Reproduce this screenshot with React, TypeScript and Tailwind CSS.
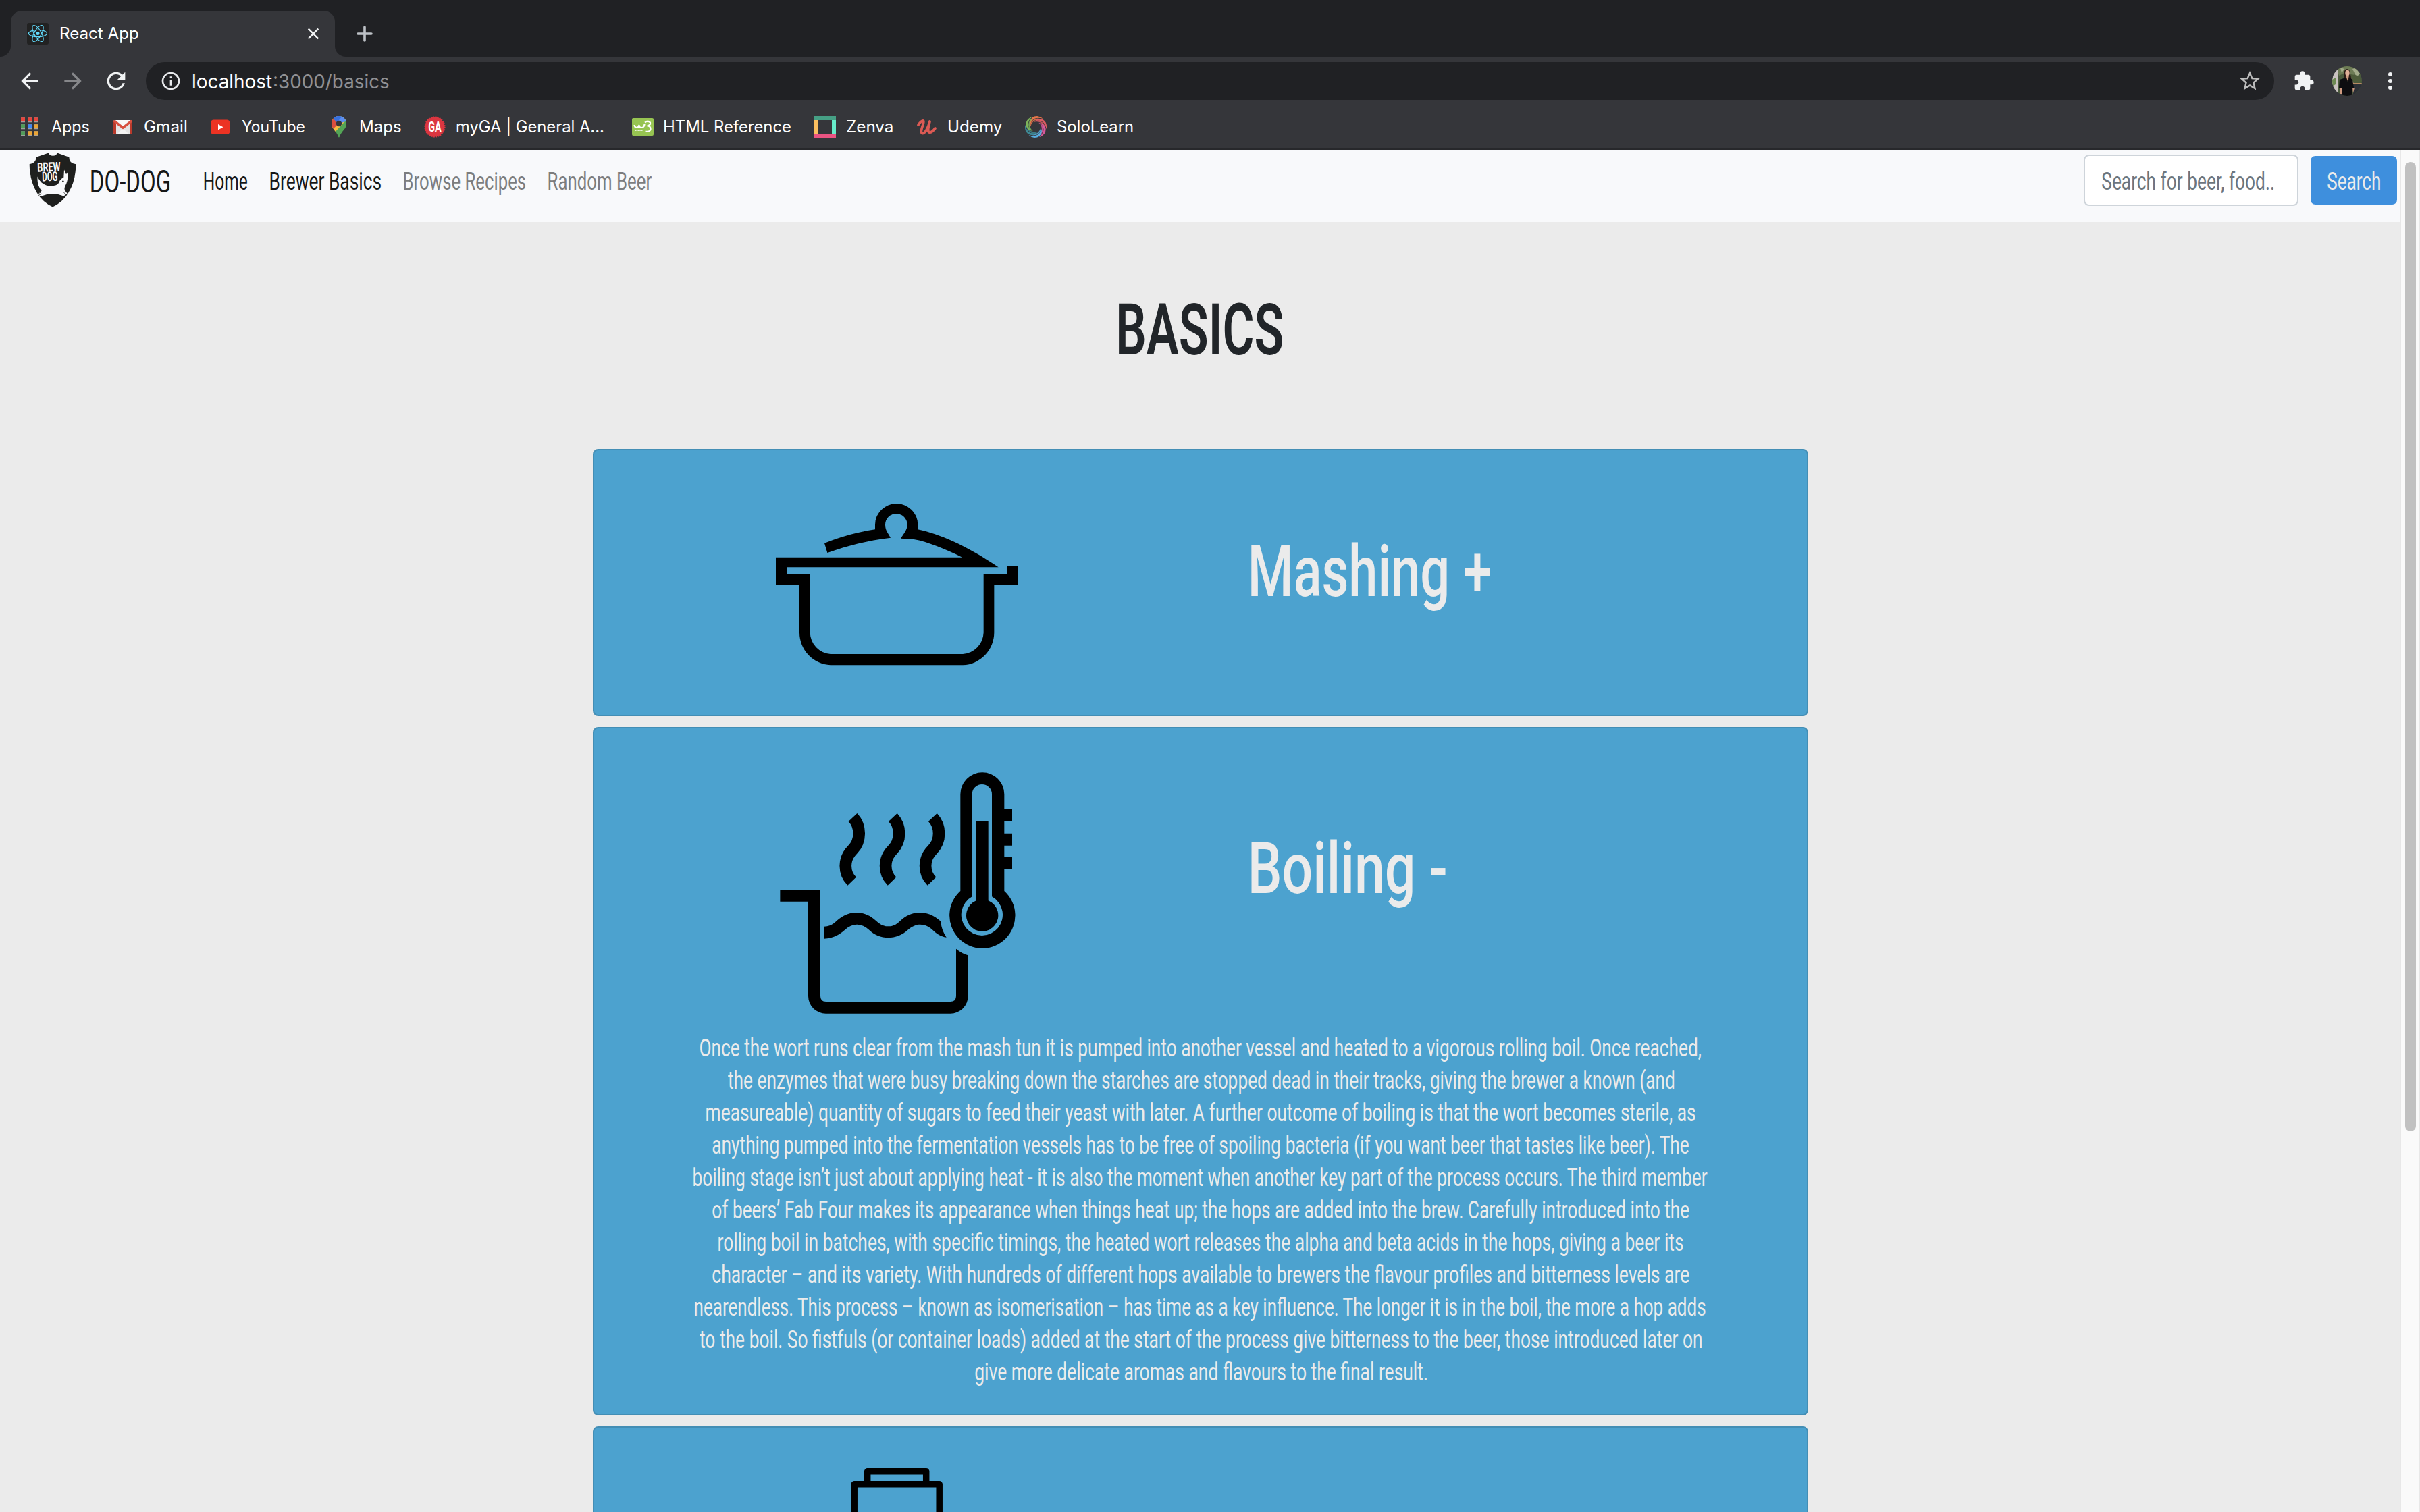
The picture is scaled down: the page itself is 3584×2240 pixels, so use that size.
import React, { useLayoutEffect, useRef } from "react";
import {
  MdArrowBack,
  MdArrowForward,
  MdClose,
  MdExtension,
  MdInfoOutline,
  MdRefresh,
  MdStarBorder,
} from "react-icons/md";

/** A single line of text, condensed or widened so that its ink spans `width` pixels. */
function Fit({ text, width, className = "" }: { text: string; width: number; className?: string }) {
  const ref = useRef<HTMLSpanElement>(null);
  useLayoutEffect(() => {
    const el = ref.current;
    const ctx = document.createElement("canvas").getContext("2d");
    if (!el || !ctx) return;
    const cs = getComputedStyle(el);
    ctx.font = `${cs.fontWeight} ${cs.fontSize} ${cs.fontFamily}`;
    const m = ctx.measureText(text);
    const ink = m.actualBoundingBoxRight + m.actualBoundingBoxLeft;
    const k = width / ink;
    el.style.transform = `translateX(${m.actualBoundingBoxLeft * k}px) scaleX(${k})`;
  }, [text, width]);
  return (
    <span className={`block shrink-0 whitespace-nowrap ${className}`} style={{ width }}>
      <span ref={ref} className="inline-block origin-left">
        {text}
      </span>
    </span>
  );
}

const ReactIcon = () => (
  <svg viewBox="0 0 32 32" className="h-8 w-8 shrink-0">
    <rect width="32" height="32" rx="3" fill="#222" />
    <g fill="none" stroke="#61dafb" strokeWidth="1.2">
      <ellipse cx="16" cy="15.5" rx="13.5" ry="5.2" />
      <ellipse cx="16" cy="15.5" rx="13.5" ry="5.2" transform="rotate(60 16 15.5)" />
      <ellipse cx="16" cy="15.5" rx="13.5" ry="5.2" transform="rotate(120 16 15.5)" />
    </g>
    <circle cx="16" cy="15.5" r="2.5" fill="#61dafb" />
  </svg>
);

const AppsIcon = () => (
  <svg viewBox="0 0 32 32" className="h-8 w-8 shrink-0">
    {[
      ["#e8453c", "#e8453c", "#e8453c"],
      ["#519c59", "#3f87f5", "#eaa436"],
      ["#519c59", "#eaa436", "#eaa436"],
    ].map((row, r) =>
      row.map((c, i) => (
        <g key={`${r}-${i}`}>
          <rect x={3 + i * 10} y={2.3 + r * 10} width="6" height="7" fill="#a3a3a3" />
          <rect x={3 + i * 10} y={2.3 + r * 10} width="6" height="5.8" fill={c} />
        </g>
      )),
    )}
  </svg>
);

const GmailIcon = () => (
  <svg viewBox="0 0 32 32" className="h-8 w-8 shrink-0">
    <rect x="2" y="6" width="28" height="21" rx="2" fill="#e4e4e4" />
    <path d="M7 27 16 18l9 9z" fill="#f3f3f3" />
    <path d="M5 6h22L16 15z" fill="#f8f8f8" />
    <path d="M2 8q0-2 2-2l2 1v20H4q-2 0-2-2zM30 8q0-2-2-2l-2 1v20h2q2 0 2-2z" fill="#b93a2c" />
    <path d="M2 8q0-2 2.500-2L16 15 27.500 6Q30 6 30 8.500L16 19.500 2 8.500z" fill="#d8503f" />
  </svg>
);

const YouTubeIcon = () => (
  <svg viewBox="0 0 32 32" className="h-8 w-8 shrink-0">
    <rect x="2" y="5.500" width="28.500" height="21.500" rx="4.500" fill="#ec3323" />
    <path d="M13 12v8.500l7.500-4.250z" fill="#fff" />
  </svg>
);

const MapsIcon = () => (
  <svg viewBox="0 0 32 32" className="h-8 w-8 shrink-0">
    <defs>
      <clipPath id="pin">
        <path d="M16 0C22 0 27 4.800 27 11c0 8-7 10-11 21C12 21 5 19 5 11 5 4.800 10 0 16 0z" />
      </clipPath>
    </defs>
    <g clipPath="url(#pin)">
      <rect width="32" height="32" fill="#54a556" />
      <path d="M0 0h32L7 27H0z" fill="#f5bd41" />
      <path d="M0 0h16l0 11L6 20 0 20z" fill="#d94f3f" />
      <path d="M7 3 12 0h14l2 7-8 3-5 1z" fill="#5a8df0" />
      <path d="M7 3 12 0h9L13 9.500z" fill="#3871dd" />
      <path d="M30 5 8 31h20z" fill="#54a556" />
    </g>
    <circle cx="16" cy="11" r="4.200" fill="#35363a" />
  </svg>
);

const GaIcon = () => (
  <svg viewBox="0 0 32 32" className="h-8 w-8 shrink-0">
    <circle cx="16" cy="16" r="14.500" fill="#db3640" stroke="#db3640" strokeWidth="2.200" strokeDasharray="2 1.250" />
    <g transform="translate(16 23) scale(.72 1)">
      <text textAnchor="middle" className="font-['Roboto',sans-serif] text-[20px] font-bold" fill="#fff">
        GA
      </text>
    </g>
  </svg>
);

const W3Icon = () => (
  <svg viewBox="0 0 32 32" className="h-8 w-8 shrink-0">
    <rect y="3" width="32" height="26" rx="2" fill="#97c452" />
    <path
      d="M3.500 13q.5 4 3.500 4t3.500-4q0 4 3.500 4 4 0 4.500-5M19 9.500q4.500-3.500 8 0 1 4-4.500 5 5.500 0 5 5-1 4.500-8 3"
      fill="none"
      stroke="#fff"
      strokeWidth="2.200"
    />
    <path d="M5 21h12" stroke="#e8f3d8" strokeWidth="1.800" strokeDasharray="1.400 .4" />
  </svg>
);

const ZenvaIcon = () => (
  <svg viewBox="0 0 32 32" className="h-8 w-8 shrink-0">
    <rect width="6" height="32" fill="#fbbf5f" />
    <rect x="26" width="6" height="32" fill="#66ecca" />
    <rect width="32" height="6" fill="#46a085" />
    <rect y="26" width="32" height="6" fill="#ea5482" />
  </svg>
);

const UdemyIcon = () => (
  <svg viewBox="0 0 32 32" className="h-8 w-8 shrink-0">
    <path
      d="M3 13Q8 6 10.500 7C13 9 5 21 8 25c4 3 10-8 12-17-2 8-4 14-1 16 3 1 6-2 9-6"
      fill="none"
      stroke="#dc5a54"
      strokeWidth="3.800"
      strokeLinecap="round"
      strokeLinejoin="round"
    />
  </svg>
);

const SoloIcon = () => (
  <svg viewBox="0 0 32 32" className="h-8 w-8 shrink-0">
    {["#e6774a", "#dc5b62", "#d7599b", "#58aee0", "#3d8894", "#7db45a"].map((c, i) => (
      <g key={c} transform={`rotate(${i * 60} 16 16)`}>
        <path d="M7 9Q9 0 18 0q6 1 8.500 4-5-2-9.500-1-7 1-9 10z" fill={c} />
        <path d="M8 13q2-9 11-9.500 3 0 5 2-8-1-12 3-3 3-3.500 7z" fill={c} opacity=".85" />
      </g>
    ))}
  </svg>
);

const bookmarks = [
  { label: "Apps", width: 56, box: "w-[138px]", Icon: AppsIcon },
  { label: "Gmail", width: 62, box: "w-[144px]", Icon: GmailIcon },
  { label: "YouTube", width: 93, box: "w-[176px]", Icon: YouTubeIcon },
  { label: "Maps", width: 60, box: "w-[142px]", Icon: MapsIcon },
  { label: "myGA | General A...", width: 218, box: "w-[308px]", Icon: GaIcon },
  { label: "HTML Reference", width: 187, box: "w-[270px]", Icon: W3Icon },
  { label: "Zenva", width: 68, box: "w-[151px]", Icon: ZenvaIcon },
  { label: "Udemy", width: 79, box: "w-[161px]", Icon: UdemyIcon },
  { label: "SoloLearn", width: 112, box: "w-[170px]", Icon: SoloIcon },
];

const Avatar = () => (
  <svg viewBox="0 0 44 44" className="ml-[26px] h-11 w-11 shrink-0 rounded-full">
    <rect width="44" height="44" fill="#4b5a3c" />
    <path d="M6 0h32v9l-8 5-8-6-12 6z" fill="#6d7b55" />
    <path d="M30 4l8-2 4 8-6 6zM12 2l6 2-4 6z" fill="#a3ab8a" />
    <path d="M28 12l10 2 6 10H30z" fill="#4d5b39" />
    <path d="M25 12l7 14-3 6z" fill="#c99f93" />
    <path d="M3 6l6 0v38H0V20z" fill="#c9c2c0" />
    <path d="M0 20l5-3v10l-5 3z" fill="#6d8a52" />
    <path d="M31 26h13v18H31z" fill="#2c3036" />
    <path d="M30 25h14v2H30z" fill="#b68a62" />
    <path d="M18 7q4-6 8 0l3 15H17z" fill="#2b1a15" />
    <ellipse cx="22.500" cy="10" rx="3.200" ry="4.500" fill="#dfae96" />
    <path d="M20 14h5l-2 8z" fill="#d09b82" />
    <path d="M11 20l9-3 3 6 3-6 4 3 2 12-3 6v6H15l-1-11-4-1z" fill="#0d0d10" />
    <path d="M11 32l3 0 1 10-3 0zM30 32h3l-2 8z" fill="#cf9a80" />
  </svg>
);

function Browser() {
  return (
    <header className="flex h-[222px] flex-col border-b-2 border-[#27282b] bg-[#35363a] font-['Inter',sans-serif] text-white">
      <div className="flex h-[84px] items-end bg-[#202124]">
        <div className="h-4 w-4 bg-[#35363a]">
          <div className="h-4 w-4 rounded-br-2xl bg-[#202124]" />
        </div>
        <div className="flex h-[68px] w-[480px] items-center rounded-t-2xl bg-[#35363a] pl-6">
          <ReactIcon />
          <Fit text="React App" width={115} className="ml-[18px] text-[24px] leading-8" />
          <MdClose className="ml-[245px] h-7 w-7 shrink-0 text-[#f1f3f4]" />
        </div>
        <div className="h-4 w-4 bg-[#35363a]">
          <div className="h-4 w-4 rounded-bl-2xl bg-[#202124]" />
        </div>
        <svg viewBox="0 0 24 24" className="mb-[22px] ml-4 h-6 w-6">
          <path d="M12 2v20M2 12h20" stroke="#bdc1c6" strokeWidth="3.600" strokeLinecap="round" />
        </svg>
      </div>
      <div className="flex h-[72px] shrink-0 items-center">
        <MdArrowBack className="ml-[25px] h-[38px] w-[38px] shrink-0 text-[#f1f3f4]" />
        <MdArrowForward className="ml-[26px] h-[38px] w-[38px] shrink-0 text-[#86878a]" />
        <MdRefresh className="ml-[25px] h-10 w-10 shrink-0 text-[#f1f3f4]" />
        <div className="ml-6 flex h-14 w-[3152px] shrink-0 items-center rounded-full bg-[#202124] pl-[21px] pr-[18px] text-[28px] leading-9">
          <MdInfoOutline className="h-8 w-8 shrink-0 text-[#e8eaed]" />
          <Fit text="localhost" width={117} className="ml-[17px] pt-px" />
          <Fit text=":3000/basics" width={170} className="ml-[3px] pt-px text-[#8f9093]" />
          <MdStarBorder className="ml-auto h-9 w-9 shrink-0 text-[#bdbdbd]" />
        </div>
        <MdExtension className="ml-7 h-8 w-8 shrink-0 text-[#f1f3f4]" />
        <Avatar />
        <div className="ml-[39px] flex flex-col gap-1">
          <div className="h-1.5 w-1.5 rounded-full bg-[#f1f3f4]" />
          <div className="h-1.5 w-1.5 rounded-full bg-[#f1f3f4]" />
          <div className="h-1.5 w-1.5 rounded-full bg-[#f1f3f4]" />
        </div>
      </div>
      <nav className="flex h-16 items-center pl-7">
        {bookmarks.map(({ label, width, box, Icon }) => (
          <div key={label} className={`flex shrink-0 items-center gap-4 ${box}`}>
            <Icon />
            <Fit text={label} width={width} className="text-[24px] leading-8" />
          </div>
        ))}
      </nav>
    </header>
  );
}

const BrewLogo = () => (
  <svg viewBox="130 80 210 242" className="mb-0.5 h-[81px] w-[70px] shrink-0">
    <path
      d="M217 81Q221 94 236 94 251 94 255 81L308 100Q308 129 338 131 338 205 305 258 280 300 235 321 190 300 165 258 133 205 132 131 160 129 162 100Z"
      fill="#1f201e"
    />
    <path
      d="M168 186C180 215 200 228 228 228 252 228 264 218 266 205Q274 194 284 190L286 156 295 176 300 168Q306 200 292 225 284 240 290 249L300 262 284 273Q236 252 188 272L172 276 170 264 186 250Q164 222 168 186Z"
      fill="#f8f9fb"
    />
    <path d="M170 262l12-5M172 270l14-7M284 257l14 12" stroke="#1f201e" strokeWidth="2.500" />
    <circle cx="281" cy="208" r="4" fill="#1f201e" />
    <g fill="#f8f9fb" className="font-['Roboto',sans-serif] text-[58px] font-bold">
      <text x="167" y="164" textLength="103" lengthAdjust="spacingAndGlyphs" transform="rotate(-2 218 142)">
        BREW
      </text>
      <text x="188" y="206" textLength="69" lengthAdjust="spacingAndGlyphs" transform="rotate(-2 222 186)">
        DOG
      </text>
    </g>
  </svg>
);

function Navbar() {
  return (
    <nav className="h-[107px] bg-[#f8f9fb]">
      <div className="flex h-[90px] items-center pl-[43px] text-[36px] leading-[44px]">
        <BrewLogo />
        <Fit text="DO-DOG" width={116} className="ml-[22px] pt-[5px] text-[45.5px] text-[#161718]" />
        <Fit text="Home" width={64} className="ml-[51px] pt-1 font-[450] text-[#161718]" />
        <Fit text="Brewer Basics" width={164} className="ml-[34px] pt-1 font-[450] text-[#161718]" />
        <Fit text="Browse Recipes" width={180} className="ml-[34px] pt-1 font-[450] text-[#7c7d7e]" />
        <Fit text="Random Beer" width={153} className="ml-[34px] pt-1 font-[450] text-[#7c7d7e]" />
        <div className="ml-auto flex h-[76px] w-[318px] items-center rounded-lg border-2 border-[#ced4da] bg-white pl-[25px] text-[#6c757d]">
          <Fit text="Search for beer, food.." width={254} className="pt-[3px] font-[450]" />
        </div>
        <div className="ml-[18px] mr-1 flex h-[72px] w-32 items-center rounded-[7px] bg-[#3e8fdd] pl-[25px] text-[#ebebeb]">
          <Fit text="Search" width={78} className="pt-[3px] font-[450]" />
        </div>
      </div>
    </nav>
  );
}

const PotIcon = () => (
  <svg viewBox="0 0 1380 870" className="ml-[220px] mt-[53px] h-[290px] w-[460px] shrink-0">
    <path d="M363 254Q480 208 588 193V172A95 94 0 0 1 778 172L777 193C870 212 990 262 1136 361H195V393H299V652A98 98 0 0 0 390 747H978A98 98 0 0 0 1070 652V393H1173V356H1221V440H1117V652A145 145 0 0 1 978 796H390A145 145 0 0 1 252 652V440H147V317H975C900 280 820 247 760 237L702 233C718 208 731 195 731 172A49 49 0 0 0 633 172C633 195 642 205 657 230C550 242 460 268 376 297Z" />
  </svg>
);

const BoilIcon = () => (
  <svg viewBox="0 0 1380 1200" className="ml-[220px] mt-[41px] h-[400px] w-[460px] shrink-0">
    <path d="M166 594H345V1067Q345 1092 370 1092H922Q948 1092 948 1067V857Q972 877 1001 886V1067A78 78 0 0 1 922 1145H370A78 78 0 0 1 291 1067V647H166Z" />
    <path d="M362 758C400 755 408 738 430 722C475 687 535 687 580 722C600 738 615 757 647 757C680 757 692 738 712 722C757 687 825 683 880 735C882 765 892 785 905 806C880 803 860 790 838 768C806 742 768 742 735 772C685 820 607 820 560 772C525 742 487 742 455 772C430 795 400 811 362 812Z" />
    <g fill="none" stroke="#000" strokeWidth="53">
      <path d="M489 273C526 312 526 378 488 416 447 457 447 518 485 557" />
      <path d="M667 273C704 312 704 378 666 416 625 457 625 518 663 557" />
      <path d="M844 273C881 312 881 378 843 416 802 457 802 518 840 557" />
    </g>
    <path
      fillRule="evenodd"
      d="M967 600V170A97.500 97 0 0 1 1162 170V236H1197V291H1162V344H1197V398H1162V450H1197V504H1162V600A146 146 0 1 1 967 600ZM1019 170A44 44 0 0 1 1107 170V625A92 92 0 1 1 1019 625Z"
    />
    <path d="M1037 290H1091V643A71 71 0 1 1 1037 643Z" />
  </svg>
);

const KegIcon = () => (
  <svg viewBox="0 0 460 90" className="ml-[220px] mt-[35px] h-[90px] w-[460px] shrink-0">
    <g fill="none" stroke="#000" strokeWidth="9.500" strokeLinejoin="round">
      <path d="M184.700 49V29.800h87V49" />
      <path d="M165.200 120V48.800h126V120" />
    </g>
  </svg>
);

const boilingLines: [string, number][] = [
  ["Once the wort runs clear from the mash tun it is pumped into another vessel and heated to a vigorous rolling boil. Once reached,", 1482],
  ["the enzymes that were busy breaking down the starches are stopped dead in their tracks, giving the brewer a known (and", 1401],
  ["measureable) quantity of sugars to feed their yeast with later. A further outcome of boiling is that the wort becomes sterile, as", 1465],
  ["anything pumped into the fermentation vessels has to be free of spoiling bacteria (if you want beer that tastes like beer). The", 1447],
  ["boiling stage isn’t just about applying heat - it is also the moment when another key part of the process occurs. The third member", 1502],
  ["of beers’ Fab Four makes its appearance when things heat up; the hops are added into the brew. Carefully introduced into the", 1447],
  ["rolling boil in batches, with specific timings, the heated wort releases the alpha and beta acids in the hops, giving a beer its", 1429],
  ["character – and its variety. With hundreds of different hops available to brewers the flavour profiles and bitterness levels are", 1447],
  ["nearendless. This process – known as isomerisation – has time as a key influence. The longer it is in the boil, the more a hop adds", 1498],
  ["to the boil. So fistfuls (or container loads) added at the start of the process give bitterness to the beer, those introduced later on", 1484],
  ["give more delicate aromas and flavours to the final result.", 669],
];

export default function App() {
  return (
    <div className="h-[2240px] w-[3584px] overflow-hidden bg-[#ebebeb] font-['Roboto',sans-serif]">
      <Browser />
      <div className="flex h-[2018px]">
        <div className="w-[3554px] shrink-0">
          <Navbar />
          <main className="flex flex-col items-center pl-0.5">
            <h1 className="mt-[107px] h-[229px] text-[105.5px] font-semibold leading-[106px] text-[#212529]">
              <Fit text="BASICS" width={242} />
            </h1>
            <div className="flex w-[1800px] flex-col gap-4 text-[#ebebeb]">
              <section className="flex h-[396px] items-start rounded-lg border-2 border-[#438eb5] bg-[#4ca2cf]">
                <PotIcon />
                <Fit
                  text="Mashing +"
                  width={354}
                  className="ml-[293px] mt-[127px] text-[105.5px] font-medium leading-[106px]"
                />
              </section>
              <section className="flex h-[1020px] flex-col rounded-lg border-2 border-[#438eb5] bg-[#4ca2cf]">
                <div className="flex h-[450px] shrink-0 items-start">
                  <BoilIcon />
                  <Fit
                    text="Boiling -"
                    width={288}
                    className="ml-[293px] mt-[155px] text-[105.5px] font-medium leading-[106px]"
                  />
                </div>
                <div className="flex flex-col items-center text-[36.5px] font-[450] leading-[48px]">
                  {boilingLines.map(([line, width]) => (
                    <Fit key={line} text={line} width={width} />
                  ))}
                </div>
              </section>
              <section className="flex h-[396px] items-start rounded-lg border-2 border-[#438eb5] bg-[#4ca2cf]">
                <KegIcon />
              </section>
            </div>
          </main>
        </div>
        <div className="w-[30px] shrink-0 border-x-2 border-[#e8e8e8] bg-[#fafafa] pl-1.5 pt-[18px]">
          <div className="h-[1436px] w-4 rounded-full bg-[#c1c1c1]" />
        </div>
      </div>
    </div>
  );
}
